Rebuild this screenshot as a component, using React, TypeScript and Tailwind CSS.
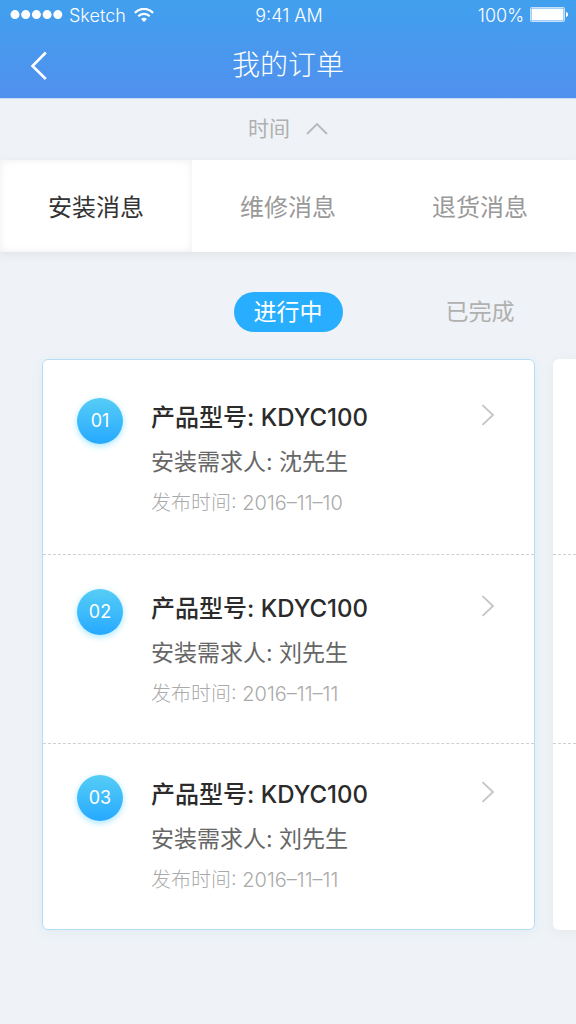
import { useState } from "react";

type Order = {
  no: string;
  model: string;
  customer: string;
  date: string;
};

const TABS = ["安装消息", "维修消息", "退货消息"];

const STATUSES = ["进行中", "已完成"];

const ORDERS: Order[] = [
  { no: "01", model: "KDYC100", customer: "沈先生", date: "2016–11–10" },
  { no: "02", model: "KDYC100", customer: "刘先生", date: "2016–11–11" },
  { no: "03", model: "KDYC100", customer: "刘先生", date: "2016–11–11" },
];

function StatusBar() {
  return (
    <div className="grid h-8 grid-cols-3 items-center pr-2 pl-2.5 text-lg leading-8 font-light">
      <div className="flex items-center">
        <svg width="53" height="12" viewBox="0 0 53 12" fill="currentColor" aria-hidden="true">
          <circle cx="5" cy="4.6" r="4.5" />
          <circle cx="15.7" cy="4.6" r="4.5" />
          <circle cx="26.4" cy="4.6" r="4.5" />
          <circle cx="37.1" cy="4.6" r="4.5" />
          <circle cx="47.8" cy="4.6" r="4.5" />
        </svg>
        <span className="ml-1.5">Sketch</span>
        <svg className="ml-2" width="20" height="16" viewBox="0 0 20 16" fill="none" aria-hidden="true">
          <path d="M0.9 4.9C5.9 -0.4 14.1 -0.4 19.1 4.9" stroke="currentColor" strokeWidth="2.3" />
          <path d="M4.3 8.3C7.4 5 12.6 5 15.7 8.3" stroke="currentColor" strokeWidth="2.2" />
          <path d="M10 14L7.1 11C8.7 9.3 11.3 9.3 12.9 11Z" fill="currentColor" />
        </svg>
      </div>
      <span className="text-center">9:41 AM</span>
      <div className="flex items-center justify-end gap-1.5">
        <span>100%</span>
        <svg width="38" height="18" viewBox="0 0 38 18" fill="none" aria-hidden="true">
          <rect x="0.5" y="0.5" width="34" height="14" rx="1" stroke="currentColor" strokeOpacity="0.7" />
          <rect x="1.5" y="1.5" width="32" height="12" fill="currentColor" />
          <path d="M36 5C37.4 5.3 38 6.2 38 7.5C38 8.8 37.4 9.7 36 10Z" fill="currentColor" />
        </svg>
      </div>
    </div>
  );
}

function OrderRow({ order }: { order: Order }) {
  return (
    <li className="border-b border-dashed border-[#d0d0d0] pt-[34px] pb-[31px] first:pb-[33px] last:border-b-0 last:pt-[31px]">
      <a href="#" className="flex items-start pr-[33px] pl-[34px]">
        <span className="flex size-[46px] shrink-0 items-center justify-center rounded-full bg-linear-to-b from-[#55cdf5] to-[#25a9ff] text-lg text-white shadow-[0_2px_6px_#a5e6ff]">
          {order.no}
        </span>
        <div className="ml-7 flex-1 pt-0.5">
          <h2 className="text-2xl leading-9 font-medium text-[#2b2b2b]">产品型号: {order.model}</h2>
          <p className="mt-2 text-[23px] leading-9 text-[#666]">安装需求人: {order.customer}</p>
          <p className="mt-[5px] text-xl leading-9 font-light text-[#aaa]">发布时间: {order.date}</p>
        </div>
        <svg className="mt-1.5 mr-1.5" width="14" height="22" viewBox="0 0 14 22" fill="none" aria-hidden="true">
          <path d="M1.5 1.2L12 11L1.5 20.8" stroke="#c4c4c4" strokeWidth="1.8" />
        </svg>
      </a>
    </li>
  );
}

export default function App() {
  const [tab, setTab] = useState(0);
  const [status, setStatus] = useState(0);

  return (
    <div className="min-h-screen overflow-hidden bg-[#eff3f7] pb-20 font-[Inter,'Noto_Sans_CJK_SC',sans-serif]">
      <header className="border-b border-[#c3dcf8] bg-linear-to-b from-[#40a0ee] to-[#5090ee] text-white">
        <StatusBar />
        <div className="grid h-[66px] grid-cols-3 items-center">
          <button type="button" aria-label="返回" className="ml-7 w-6">
            <svg width="24" height="30" viewBox="0 0 24 30" fill="none" aria-hidden="true">
              <path d="M17.8 2.5L4.5 16L17.8 29" stroke="currentColor" strokeWidth="2.6" />
            </svg>
          </button>
          <h1 className="text-center text-[28px] leading-10 font-light">我的订单</h1>
        </div>
      </header>

      <button type="button" className="flex h-[61px] w-full items-center justify-center gap-4 pb-0.5 text-[21px] text-[#b0b0b0]">
        时间
        <svg width="22" height="14" viewBox="0 0 22 14" fill="none" aria-hidden="true">
          <path d="M1 12L11 2L21 12" stroke="#b8b8b8" strokeWidth="1.8" />
        </svg>
      </button>

      <nav className="grid grid-cols-3 bg-white shadow-[0_3px_8px_#e1e4e8]">
        {TABS.map((label, i) => (
          <button
            key={label}
            type="button"
            className={`h-[92px] pt-1 text-2xl ${tab === i ? "text-[#333] shadow-[inset_0_0_8px_#eeeef2]" : "text-[#999]"}`}
            onClick={() => setTab(i)}
          >
            {label}
          </button>
        ))}
      </nav>

      <div className="mt-10 grid grid-cols-3 items-center">
        {STATUSES.map((label, i) => (
          <button
            key={label}
            type="button"
            className={`h-10 justify-self-center rounded-full px-5 text-[23px] leading-10 first:col-start-2 ${status === i ? "bg-[#27aeff] text-white" : "text-[#b0b0b0]"}`}
            onClick={() => setStatus(i)}
          >
            {label}
          </button>
        ))}
      </div>

      <main className="mt-[27px] flex gap-[18px] pl-[42px]">
        <ul className="w-[calc(100%-41px)] shrink-0 rounded-md border border-[#b5def4] bg-white pt-1 shadow-[0_2px_12px_#dfeaf3]">
          {ORDERS.map((order) => (
            <OrderRow key={order.no} order={order} />
          ))}
        </ul>
        <div className="flex w-full shrink-0 flex-col rounded-md bg-white shadow-[0_2px_12px_#e4e8ea]">
          <div className="h-[196px] border-b border-dashed border-[#d0d0d0]" />
          <div className="h-[189px] border-b border-dashed border-[#d0d0d0]" />
        </div>
      </main>
    </div>
  );
}
